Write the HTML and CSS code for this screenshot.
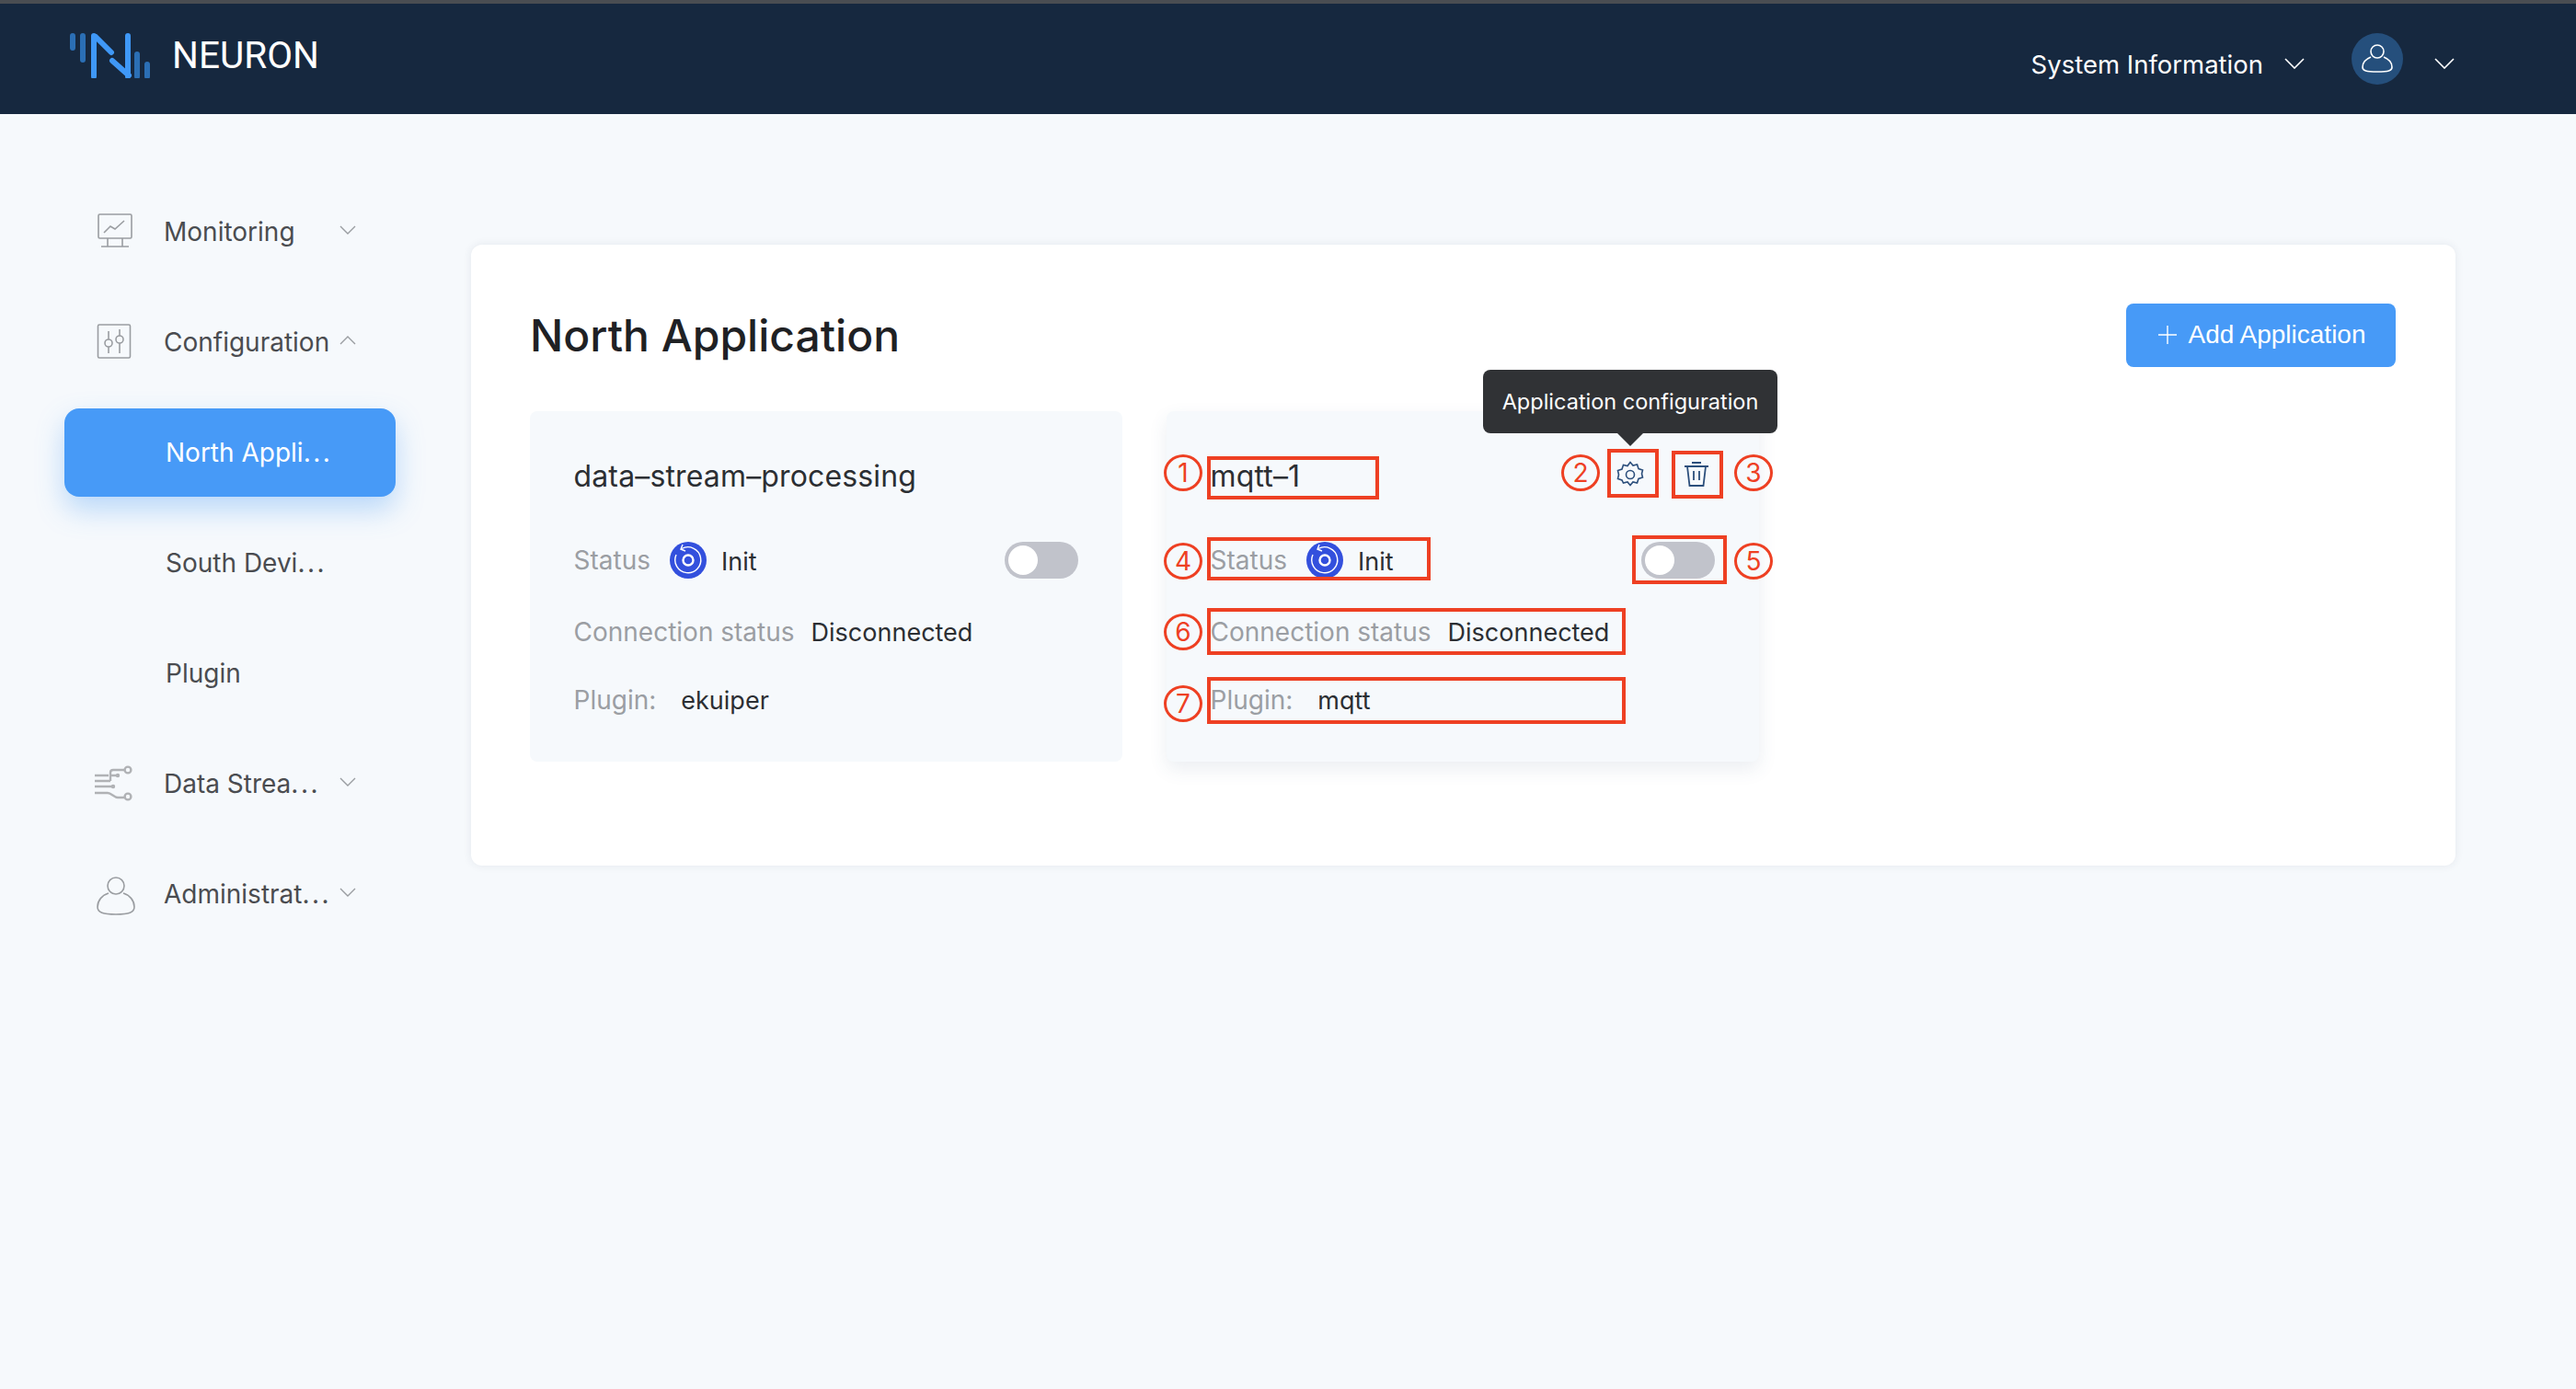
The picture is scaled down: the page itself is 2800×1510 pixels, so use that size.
FILE: index.html
```html
<!DOCTYPE html>
<html lang="en">
<head>
<meta charset="utf-8">
<title>Neuron</title>
<link rel="stylesheet" href="styles.css">
</head>
<body>
<header class="topbar">
  <div class="brand">
    <svg class="logo" width="90" height="50" viewBox="0 0 90 50" fill="none" stroke-linecap="round" stroke-width="6">
      <path d="M3 4v13M14 4v26M73 24v24M84 35v13" stroke="#2b6fb5"/>
      <path d="M26 4v44M63 4v44M28 5l17 17M46 31l18 16" stroke="#3f98f7"/>
    </svg>
    <span class="brand-name">NEURON</span>
  </div>
  <div class="top-actions">
    <span class="sys-info">System Information</span>
    <svg class="top-chev" width="22" height="12" viewBox="0 0 22 12" fill="none" stroke="#fff" stroke-width="1.6"><path d="M1 1l10 10L21 1"/></svg>
    <span class="avatar">
      <svg width="36" height="36" viewBox="0 0 36 36" fill="none" stroke="#fff" stroke-width="1.6"><circle cx="18" cy="10" r="7"/><path d="M11 16c-5 2-9 6-9 11 0 4 4 5 16 5s16-1 16-5c0-5-4-9-9-11"/></svg>
    </span>
    <svg class="top-chev" width="22" height="12" viewBox="0 0 22 12" fill="none" stroke="#fff" stroke-width="1.6"><path d="M1 1l10 10L21 1"/></svg>
  </div>
</header>
<div class="shell">
  <nav class="sidebar">
    <div class="nav-item">
      <svg class="nav-icon" width="40" height="38" viewBox="0 0 40 38" fill="none" stroke="#9a9da1" stroke-width="1.6"><rect x="2" y="1" width="36" height="26" rx="1.5"/><path d="M8 21l7-7 5 3 10-9M12 27v9M28 27v9M5 36h30"/></svg>
      <span class="nav-text">Monitoring</span>
      <svg class="chev" width="18" height="10" viewBox="0 0 18 10" fill="none" stroke="#9a9da1" stroke-width="1.4"><path d="M1 1l8 8 8-8"/></svg>
    </div>
    <div class="nav-item">
      <svg class="nav-icon" width="40" height="38" viewBox="0 0 40 38" fill="none" stroke="#9a9da1" stroke-width="1.6"><rect x="1.500" y="1" width="35" height="36" rx="1.500"/><path d="M13 8v9M13 25v7M25 6v7M25 21v11"/><circle cx="13" cy="21" r="4"/><circle cx="25" cy="17" r="4"/></svg>
      <span class="nav-text">Configuration</span>
      <svg class="chev" width="18" height="10" viewBox="0 0 18 10" fill="none" stroke="#9a9da1" stroke-width="1.4"><path d="M1 9l8-8 8 8"/></svg>
    </div>
    <div class="nav-item sub active"><span class="nav-text">North Appli<span class="dots">...</span></span></div>
    <div class="nav-item sub"><span class="nav-text">South Devi<span class="dots">...</span></span></div>
    <div class="nav-item sub"><span class="nav-text">Plugin</span></div>
    <div class="nav-item">
      <svg class="nav-icon wide" width="42" height="40" viewBox="0 0 42 40" fill="none" stroke="#b0b2b5" stroke-width="2.400"><path d="M0 11h15M0 17h17M0 23h20M0 30h14c4 0 7 5 11 5h7M17 17V8c0-2 1-3 3-3h12M17 11h8"/><circle cx="36" cy="5" r="3.400"/><circle cx="36" cy="34" r="3.400"/><circle cx="25" cy="11" r="2.200" fill="#b0b2b5" stroke="none"/><circle cx="20" cy="23" r="2.200" fill="#b0b2b5" stroke="none"/></svg>
      <span class="nav-text">Data Strea<span class="dots">...</span></span>
      <svg class="chev" width="18" height="10" viewBox="0 0 18 10" fill="none" stroke="#9a9da1" stroke-width="1.4"><path d="M1 1l8 8 8-8"/></svg>
    </div>
    <div class="nav-item">
      <svg class="nav-icon" width="42" height="44" viewBox="0 0 42 44" fill="none" stroke="#9a9da1" stroke-width="1.6"><circle cx="21" cy="11" r="9"/><path d="M13 19C6 21 1 27 1 34c0 6 6 8 20 8s20-2 20-8c0-7-5-13-12-15"/></svg>
      <span class="nav-text">Administrat<span class="dots">...</span></span>
      <svg class="chev" width="18" height="10" viewBox="0 0 18 10" fill="none" stroke="#9a9da1" stroke-width="1.4"><path d="M1 1l8 8 8-8"/></svg>
    </div>
  </nav>
  <main class="content">
    <section class="panel">
      <div class="panel-head">
        <h1 class="panel-title">North Application</h1>
        <button class="add-btn"><svg width="22" height="22" viewBox="0 0 22 22" fill="none" stroke="#fff" stroke-width="1.4"><path d="M11 1v20M1 11h20"/></svg>Add Application</button>
      </div>
      <div class="cards">
        <article class="app-card">
          <div class="card-title-row"><span class="card-title">data–stream–processing</span></div>
          <div class="row status-row">
            <span class="label">Status</span>
            <svg class="status-icon" width="40" height="40" viewBox="0 0 40 40"><circle cx="20" cy="20" r="20" fill="#3350dd"/><circle cx="20" cy="20" r="5.5" fill="none" stroke="#fff" stroke-width="2.4"/><path d="M13 7.500A14 14 0 1 1 7 14" fill="none" stroke="#fff" stroke-width="1.4"/><path d="M14 3l-2 5 5 2" fill="none" stroke="#fff" stroke-width="1.4"/></svg>
            <span class="value">Init</span>
            <span class="toggle"><span class="knob"></span></span>
          </div>
          <div class="row conn-row"><span class="label">Connection status</span><span class="value">Disconnected</span></div>
          <div class="row plugin-row"><span class="label">Plugin:</span><span class="value">ekuiper</span></div>
        </article>
        <article class="app-card raised">
          <div class="card-title-row">
            <span class="card-title">mqtt–1</span>
            <span class="card-tools">
              <svg width="30" height="30" viewBox="0 0 30 30" fill="none" stroke="#2c4f7c" stroke-width="1.6"><path d="M15 1.500l3 3.500 4.500-1 1.500 4.500 4.500 1.500-1 4 1 4-4.500 1.500-1.500 4.500-4.500-1-3 3.500-3-3.500-4.500 1L6 21l-4.500-1.500 1-4.500-1-4.500L6 9l1.500-4.500 4.500 1z"/><circle cx="15" cy="15" r="4.500"/></svg>
              <svg width="28" height="27" viewBox="0 0 28 27" fill="none" stroke="#2c4f7c" stroke-width="1.800"><path d="M1 5h26M9 1h10M4 5l2.500 21h15L24 5M11 10v10M17 10v10"/></svg>
            </span>
          </div>
          <div class="row status-row">
            <span class="label">Status</span>
            <svg class="status-icon" width="40" height="40" viewBox="0 0 40 40"><circle cx="20" cy="20" r="20" fill="#3350dd"/><circle cx="20" cy="20" r="5.5" fill="none" stroke="#fff" stroke-width="2.4"/><path d="M13 7.500A14 14 0 1 1 7 14" fill="none" stroke="#fff" stroke-width="1.4"/><path d="M14 3l-2 5 5 2" fill="none" stroke="#fff" stroke-width="1.4"/></svg>
            <span class="value">Init</span>
            <span class="toggle"><span class="knob"></span></span>
          </div>
          <div class="row conn-row"><span class="label">Connection status</span><span class="value">Disconnected</span></div>
          <div class="row plugin-row"><span class="label">Plugin:</span><span class="value">mqtt</span></div>

          <div class="tooltip">Application configuration</div>
          <span class="mark box-1"></span>
          <span class="mark box-2"></span>
          <span class="mark box-3"></span>
          <span class="mark box-4"></span>
          <span class="mark box-5"></span>
          <span class="mark box-6"></span>
          <span class="mark box-7"></span>
          <span class="num num-1">1</span>
          <span class="num num-2">2</span>
          <span class="num num-3">3</span>
          <span class="num num-4">4</span>
          <span class="num num-5">5</span>
          <span class="num num-6">6</span>
          <span class="num num-7">7</span>
        </article>
      </div>
    </section>
  </main>
</div>
</body>
</html>
```
FILE: styles.css
```css
* { box-sizing: border-box; }
html, body { margin: 0; height: 100%; }
body {
  background: #f6f9fc;
  font-family: Inter, "Noto Sans", sans-serif;
  color: #2c2f33;
  overflow: hidden;
}
.topbar {
  height: 124px;
  background: #16283f;
  border-top: 4px solid #4a4d52;
  display: flex;
  align-items: flex-start;
  justify-content: space-between;
  color: #fff;
}
.brand { display: flex; align-items: center; margin: 31px 0 0 76px; gap: 21px; }
.logo { display: block; }
.brand-name { font-family: Roboto, sans-serif; font-size: 40.5px; line-height: 50px; }
.top-actions { display: flex; align-items: center; margin: 32px 132px 0 0; height: 56px; }
.sys-info { font-size: 27.5px; line-height: 56px; margin-top: 12px; }
.top-chev { margin-left: 23px; margin-top: 9px; }
.avatar {
  width: 56px; height: 56px; border-radius: 50%;
  background: #254f7c; margin-left: 51px;
  display: flex; align-items: center; justify-content: center;
}
.avatar + .top-chev { margin-left: 34px; }
.shell { display: flex; align-items: flex-start; }
.sidebar {
  width: 512px; padding: 80px 82px 0 70px;
  display: flex; flex-direction: column; gap: 24px;
}
.nav-item {
  height: 96px; display: flex; align-items: center; position: relative;
  padding-left: 108px; font-size: 28px; color: #4a4c50;
}
.nav-item.sub { padding-left: 110px; }
.nav-icon { position: absolute; left: 35px; top: 28px; }
.nav-icon.wide { left: 33px; }
.nav-text { white-space: nowrap; }
.dots { letter-spacing: 2.5px; }
.chev { position: absolute; left: 299px; top: 41px; }
.active {
  background: #479af7; color: #fff; border-radius: 16px;
  box-shadow: 0 14px 30px rgba(71,154,247,.35);
}
.content { flex: 1; padding: 142px 131px 0 0; }
.panel {
  background: #fff; border-radius: 12px;
  box-shadow: 0 0 10px rgba(40,60,90,.09);
  padding: 64px 65px 113px 64px;
}
.panel-head { display: flex; justify-content: space-between; align-items: center; height: 69px; }
.panel-title { margin: 0; font-size: 48px; font-weight: 500; color: #1f2124; }
.add-btn {
  width: 293px; height: 69px; border: 0; border-radius: 8px;
  background: #479af7; color: #fff; font: 28px "Liberation Sans", Arial, sans-serif;
  display: flex; align-items: center; justify-content: center; gap: 11px; padding: 0 0 2px 2px;
}
.cards { display: flex; gap: 48px; margin-top: 48px; }
.app-card {
  width: 644px; height: 381px; background: #f6f9fc; border-radius: 8px;
  padding: 48px 48px 0 47.5px; position: relative; font-size: 28px;
  display: flex; flex-direction: column;
}
.raised { box-shadow: 0 8px 20px rgba(60,90,130,.10); }
.card-title-row { height: 46px; display: flex; align-items: center; justify-content: space-between; }
.card-title { font-size: 32px; letter-spacing: 0.15px; color: #2c2f33; margin-top: -1px; }
.card-tools { display: flex; align-items: center; gap: 43px; margin-right: 6px; margin-top: -5px; }
.card-tools svg { display: block; }
.row { height: 40px; display: flex; align-items: center; }
.status-row { margin-top: 48px; }
.conn-row { margin-top: 38px; }
.plugin-row { margin-top: 34px; }
.label { color: #9b9ea3; }
.value { color: #2c2f33; font-size: 27px; }
.status-icon { margin-left: 21px; }
.status-row .value { margin-left: 16px; margin-top: 3px; }
.conn-row .value { margin-left: 18px; }
.plugin-row .value { margin-left: 27px; }
.toggle {
  margin-left: auto; width: 80px; height: 40px; border-radius: 20px;
  background: #c1c3cb; padding: 4px; display: block;
}
.knob { display: block; width: 32px; height: 32px; border-radius: 50%; background: #fff; }
.tooltip {
  position: absolute; left: 344px; top: -45px; width: 320px; height: 69px;
  background: #303235; color: #fff; border-radius: 8px;
  font-size: 23.5px; display: flex; align-items: center; justify-content: center;
}
.tooltip::after {
  content: ""; position: absolute; left: 146px; top: 69px;
  border: 14px solid transparent; border-top-color: #303235; border-bottom: 0;
}
.mark { position: absolute; border: 4px solid #ee4023; }
.box-1 { left: 44px; top: 49px; width: 187px; height: 47px; }
.box-2 { left: 479px; top: 41px; width: 56px; height: 53px; }
.box-3 { left: 549px; top: 43px; width: 56px; height: 52px; }
.box-4 { left: 44px; top: 137px; width: 243px; height: 47px; }
.box-5 { left: 506px; top: 135px; width: 103px; height: 53px; }
.box-6 { left: 44px; top: 214px; width: 455px; height: 51px; }
.box-7 { left: 44px; top: 289px; width: 455px; height: 51px; }
.num {
  position: absolute; width: 42px; height: 40px;
  border: 3px solid #ee4023; border-radius: 50%;
  color: #ee4023; font-size: 28px; font-weight: 400;
  display: flex; align-items: center; justify-content: center;
}
.num-1 { left: -3px; top: 47px; }
.num-2 { left: 429px; top: 47px; }
.num-3 { left: 617px; top: 47px; }
.num-4 { left: -3px; top: 143px; }
.num-5 { left: 617px; top: 143px; }
.num-6 { left: -3px; top: 220px; }
.num-7 { left: -3px; top: 298px; }
```
